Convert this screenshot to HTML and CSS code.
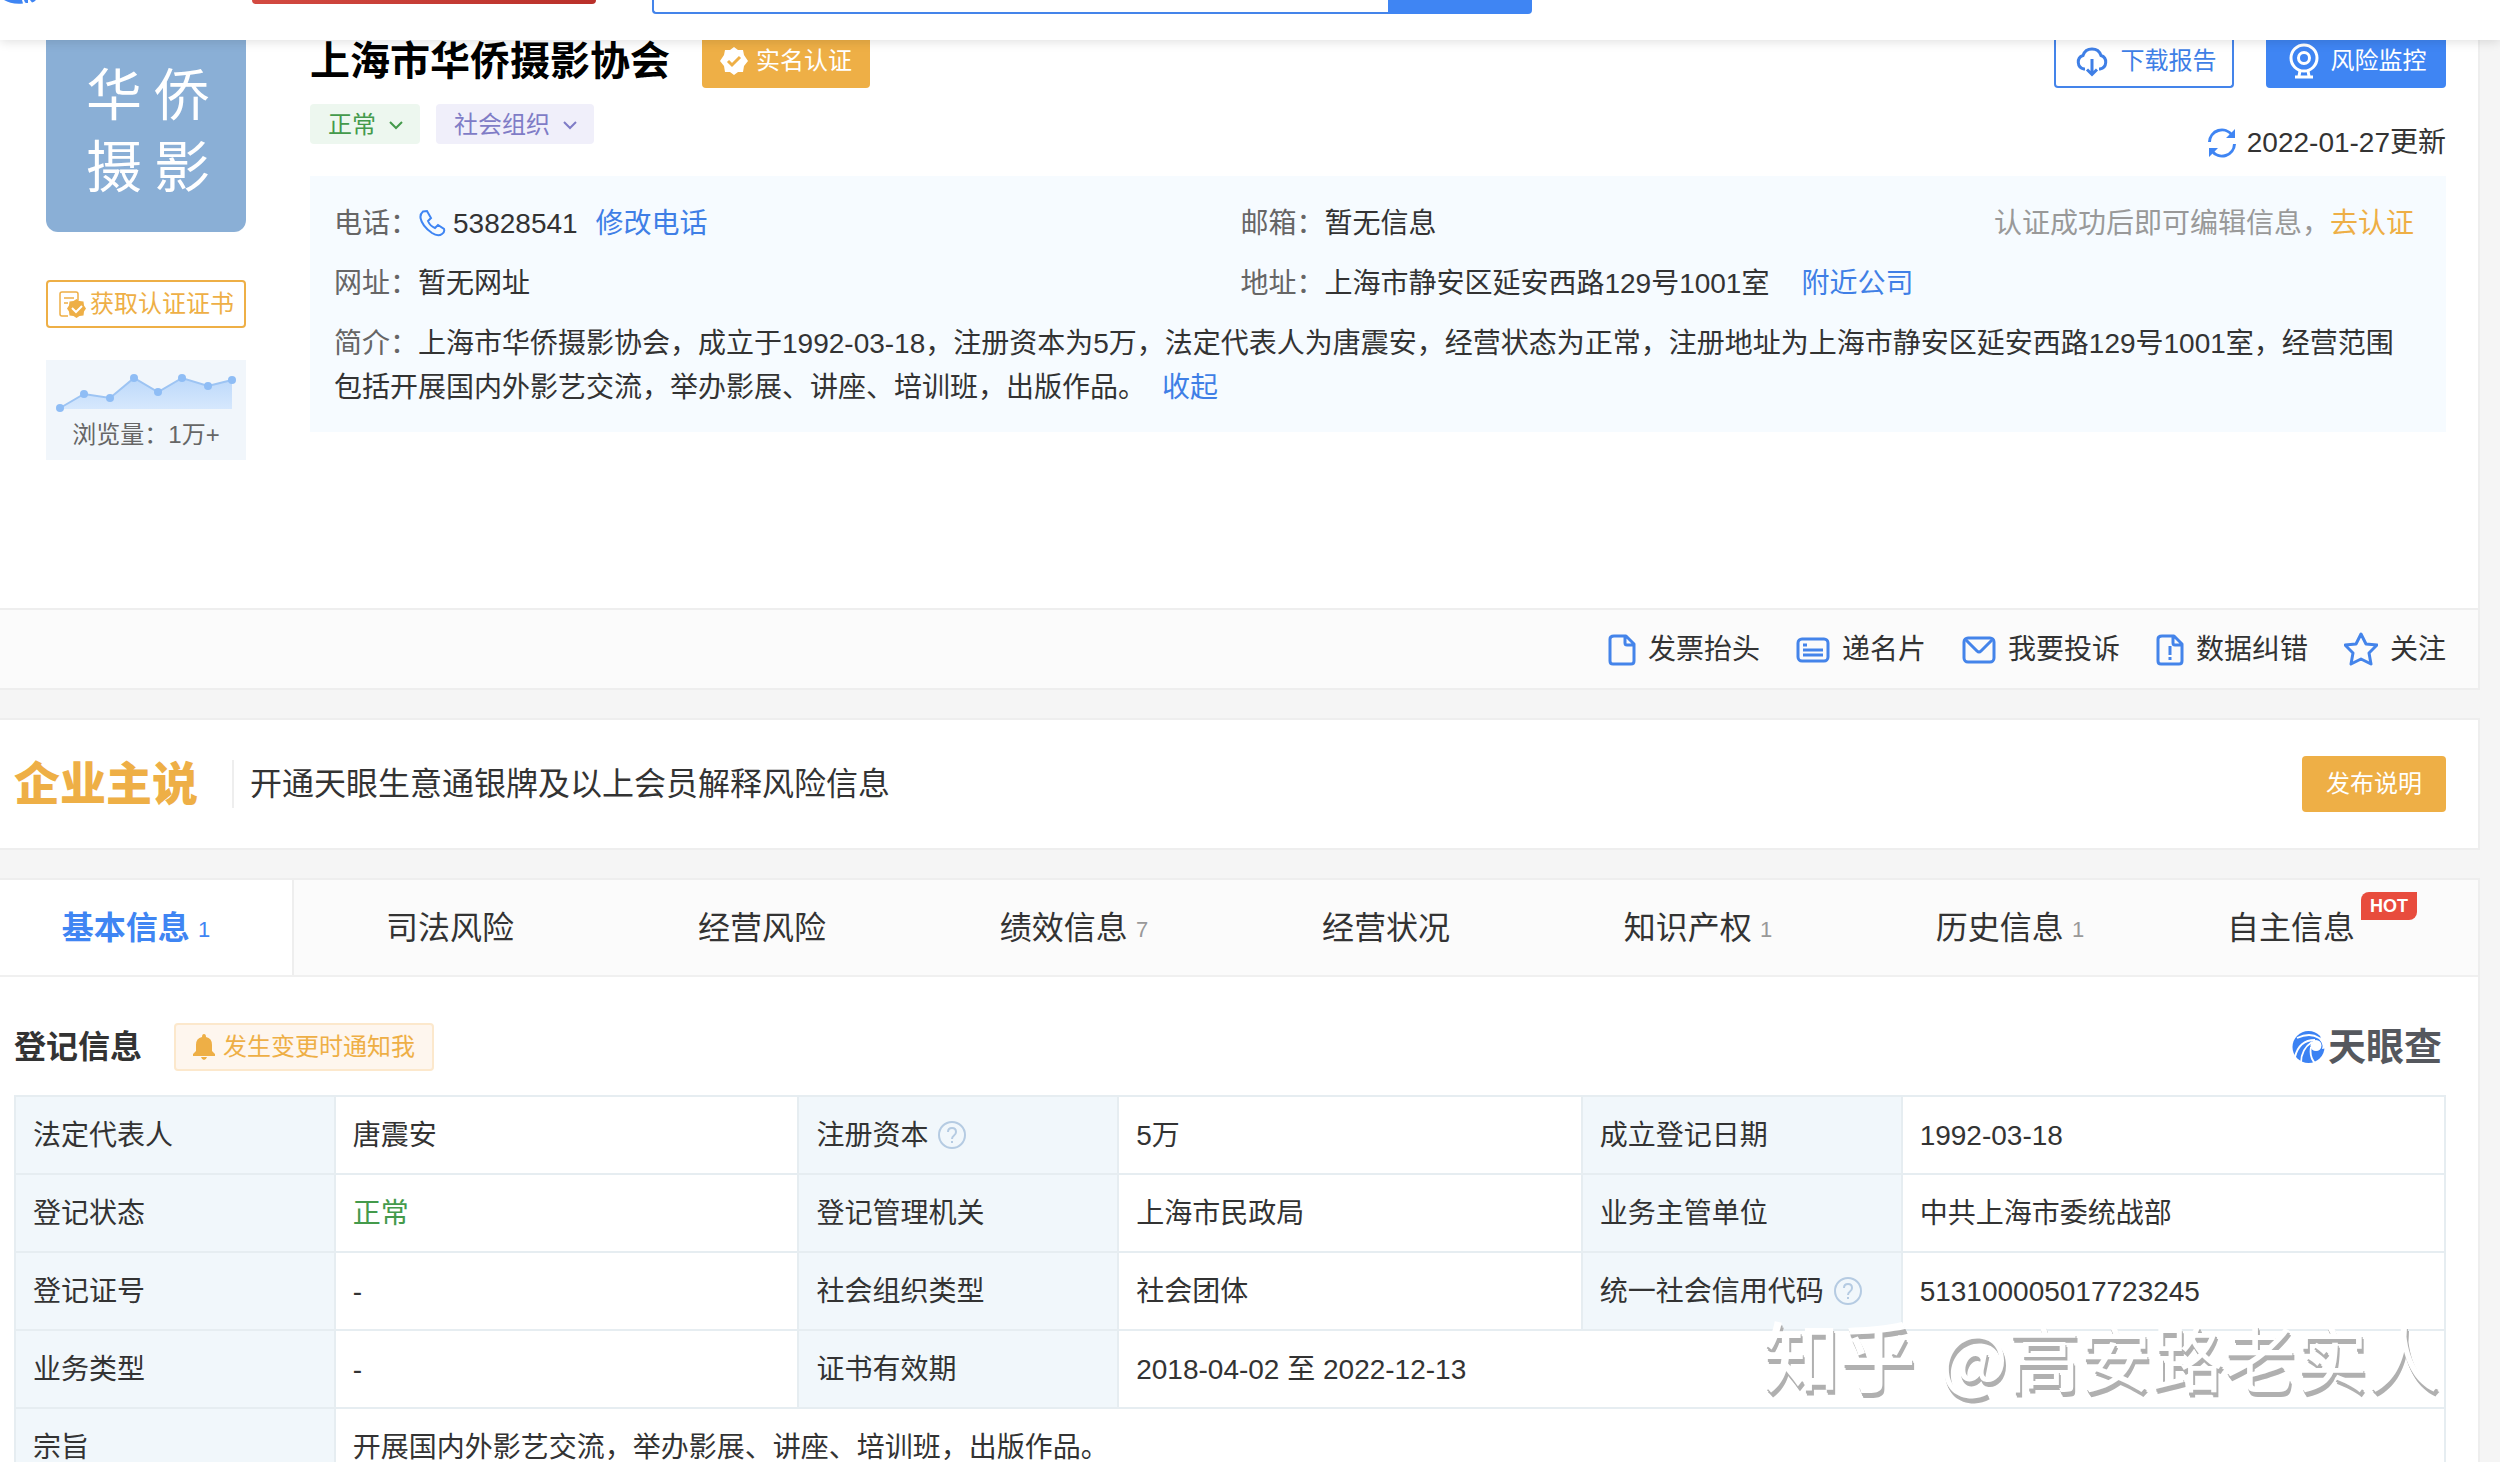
FILE: index.html
```html
<!DOCTYPE html>
<html lang="zh-CN">
<head>
<meta charset="utf-8">
<title>上海市华侨摄影协会</title>
<link rel="stylesheet" href="styles.css">
</head>
<body>
<header class="topbar">
  <svg class="topbar-logo" viewBox="0 0 32 4" aria-hidden="true"><path d="M0 0h18l1 3.500q-12 1-19-3.500zM20 0h4v3q-2 0-3-.500zM26 0h6q-2 2-4 2.500z"/></svg>
  <div class="topbar-banner"></div>
  <form class="search">
    <input class="search-input" type="text" aria-label="搜索">
    <button class="search-button" type="button" aria-label="搜索"></button>
  </form>
</header>

<main class="page">
  <section class="card company">
    <div class="company-main">
      <aside class="side">
        <div class="avatar"><span>华</span><span>侨</span><span>摄</span><span>影</span></div>
        <button class="cert-button" type="button">
          <svg width="28" height="28" viewBox="0 0 28 28" aria-hidden="true"><path d="M10 26H4q-2 0-2-2V4q0-2 2-2h14q2 0 2 2v6M6 8h10M6 13h4" fill="none" stroke="#eeaf46" stroke-width="1.500"/><path d="M18.500 11l3 2 4 .500.500 4 2 3-2 3-.500 4-4 .500-3 2-3-2-4-.500-.500-4-2-3 2-3 .500-4 4-.500z" fill="#eeaf46" transform="translate(0 -2)"/><path d="M14 18l4 4 6-6" fill="none" stroke="#fff" stroke-width="2"/></svg>
          获取认证证书
        </button>
        <div class="views">
          <svg class="views-chart" viewBox="0 0 180 40" aria-hidden="true">
            <defs><linearGradient id="area" x1="0" y1="0" x2="0" y2="1"><stop offset="0" stop-color="#bcd8fa"/><stop offset="1" stop-color="#d6e8fd"/></linearGradient></defs>
            <path d="M4 35L28 21 54 25 78 5 102 19 126 5 152 13 176 7V36H4z" fill="url(#area)"/>
            <path d="M4 35L28 21 54 25 78 5 102 19 126 5 152 13 176 7" fill="none" stroke="#9dc4f3" stroke-width="2"/>
            <g fill="#8fbdf5"><circle cx="4" cy="35" r="4"/><circle cx="28" cy="21" r="4"/><circle cx="54" cy="25" r="4"/><circle cx="78" cy="5" r="4"/><circle cx="102" cy="19" r="4"/><circle cx="126" cy="5" r="4"/><circle cx="152" cy="13" r="4"/><circle cx="176" cy="7" r="4"/></g>
          </svg>
          <div>浏览量：1万+</div>
        </div>
      </aside>

      <div class="detail">
        <div class="detail-head">
          <div class="identity">
            <div class="name-row">
              <h1 class="name">上海市华侨摄影协会</h1>
              <span class="verified">
                <svg width="28" height="28" viewBox="0 0 28 28" aria-hidden="true"><path d="M14 0l4 3 5 0 1 5 4 6-4 5-1 6-5 0-4 3-4-3-5 0-1-6-4-5 4-6 1-5 5 0z" fill="#fff"/><path d="M8 14l4 4 8-8" fill="none" stroke="#eeaf46" stroke-width="3"/></svg>
                实名认证
              </span>
            </div>
            <div class="tags">
              <button class="tag tag-green" type="button">正常<svg width="16" height="10" viewBox="0 0 16 10" aria-hidden="true"><path d="M2 2l6 6 6-6"/></svg></button>
              <button class="tag tag-purple" type="button">社会组织<svg width="16" height="10" viewBox="0 0 16 10" aria-hidden="true"><path d="M2 2l6 6 6-6"/></svg></button>
            </div>
          </div>
          <div class="tools">
            <div class="tool-buttons">
              <button class="tool" type="button">
                <svg width="34" height="32" viewBox="0 0 34 32" aria-hidden="true"><path d="M10 24H9a7 7 0 0 1-1-13.500A9.500 9.500 0 0 1 26 10.500 7 7 0 0 1 25 24h-1M17 14v15M12 24.500l5 5 5-5"/></svg>
                下载报告
              </button>
              <button class="tool tool-primary" type="button">
                <svg width="30" height="36" viewBox="0 0 30 36" aria-hidden="true"><circle cx="15" cy="15" r="13"/><circle cx="15" cy="15" r="5.500"/><path d="M11 28l-1 5M19 28l1 5M6 34h18"/></svg>
                风险监控
              </button>
            </div>
            <div class="updated">
              <svg width="30" height="30" viewBox="0 0 30 30" aria-hidden="true"><path d="M2.500 14A12.500 12.500 0 0 1 25 7M27.500 16A12.500 12.500 0 0 1 5 23" fill="none" stroke="#3f85f3" stroke-width="3"/><path d="M28 1v9h-9zM2 29v-9h9z" fill="#3f85f3"/></svg>
              2022-01-27更新
            </div>
          </div>
        </div>

        <div class="info">
          <div class="info-grid">
            <div><span class="key">电话：</span><svg class="phone" width="28" height="28" viewBox="0 0 28 28" aria-hidden="true"><path d="M5 2.500l4-.500 4 7-3 3q2 5 7 7l3-3 6 4q1 3-2 5-4 3-10-1Q4 17 2.500 9 2 5 5 2.500z"/></svg>53828541<a class="link after-value" href="#">修改电话</a></div>
            <div><span class="key">邮箱：</span>暂无信息</div>
            <div class="hint">认证成功后即可编辑信息，<a class="link-gold" href="#">去认证</a></div>
            <div><span class="key">网址：</span>暂无网址</div>
            <div class="address"><span class="key">地址：</span>上海市静安区延安西路129号1001室<a class="link nearby" href="#">附近公司</a></div>
          </div>
          <p class="intro"><span class="key">简介：</span>上海市华侨摄影协会，成立于1992-03-18，注册资本为5万，法定代表人为唐震安，经营状态为正常，注册地址为上海市静安区延安西路129号1001室，经营范围包括开展国内外影艺交流，举办影展、讲座、培训班，出版作品。<a class="link fold" href="#">收起</a></p>
        </div>
      </div>
    </div>

    <div class="actions">
      <a class="action" href="#"><svg width="28" height="32" viewBox="0 0 28 32" aria-hidden="true"><path d="M6 2h12l8 8v17q0 3-3 3H5q-3 0-3-3V5q0-3 4-3zM17 3v6q0 2 2 2h6"/></svg>发票抬头</a>
      <a class="action" href="#"><svg width="34" height="26" viewBox="0 0 34 26" aria-hidden="true"><rect x="2" y="2" width="30" height="22" rx="4"/><path d="M7 8h4M7 13h20M7 18h20"/></svg>递名片</a>
      <a class="action" href="#"><svg width="34" height="28" viewBox="0 0 34 28" aria-hidden="true"><rect x="2" y="2" width="30" height="24" rx="4"/><path d="M4 4l11 11q2 2 4 0L30 4"/></svg>我要投诉</a>
      <a class="action" href="#"><svg width="28" height="32" viewBox="0 0 28 32" aria-hidden="true"><path d="M6 2h12l8 8v17q0 3-3 3H5q-3 0-3-3V5q0-3 4-3zM17 3v6q0 2 2 2h6M14 12v9M14 23v3"/></svg>数据纠错</a>
      <a class="action" href="#"><svg width="34" height="36" viewBox="1 0 34 36" aria-hidden="true"><path d="M18 2l5 10 11 1-8 8 2 11-10-5-10 5 2-11-8-8 11-1z"/></svg>关注</a>
    </div>
  </section>

  <section class="card owner">
    <strong class="owner-logo">企业主说</strong>
    <p class="owner-text">开通天眼生意通银牌及以上会员解释风险信息</p>
    <button class="publish" type="button">发布说明</button>
  </section>

  <section class="card record">
    <nav class="tabs">
      <a class="tab tab-active" href="#">基本信息<small>1</small></a>
      <a class="tab" href="#">司法风险</a>
      <a class="tab" href="#">经营风险</a>
      <a class="tab" href="#">绩效信息<small>7</small></a>
      <a class="tab" href="#">经营状况</a>
      <a class="tab" href="#">知识产权<small>1</small></a>
      <a class="tab" href="#">历史信息<small>1</small></a>
      <a class="tab" href="#">自主信息<b class="hot">HOT</b></a>
    </nav>

    <div class="record-body">
      <div class="record-head">
        <h2 class="record-title">登记信息</h2>
        <button class="notify" type="button">
          <svg width="22" height="26" viewBox="0 0 22 26" aria-hidden="true"><path d="M11 0q2 0 2 3 6 1 6 8v6l3 3v2H0v-2l3-3v-6q0-7 6-8 0-3 2-3zM8 23h6q-1 3-3 3t-3-3z" fill="#eeaf46"/></svg>
          发生变更时通知我
        </button>
        <div class="brand">
          <svg width="34" height="34" viewBox="0 0 34 34" aria-hidden="true"><circle cx="16.500" cy="17" r="16" fill="#3b82f3"/><path d="M29 4l6 8v6l-5 1q2-6-2-9z" fill="#fff"/><circle cx="24" cy="15.500" r="5.500" fill="#fff"/><path d="M23 10Q7 10 3 27M20 12Q9 19 9 33M19 17Q17 28 24 34M5 8Q18 2 27 8q4 3 5 9" fill="none" stroke="#fff" stroke-width="1.800"/></svg>
          <span>天眼查</span>
        </div>
      </div>

      <table class="facts">
        <colgroup><col class="c-key"><col class="c-val"><col class="c-key"><col class="c-val"><col class="c-key"><col class="c-last"></colgroup>
        <tbody>
          <tr><th scope="row">法定代表人</th><td>唐震安</td><th scope="row">注册资本<svg class="help" width="28" height="28" viewBox="0 0 28 28" aria-hidden="true"><circle cx="14" cy="14" r="13"/><path d="M10 11q0-4 4-4t4 4q0 2-2 3.500-2 1.500-2 3.500M14 20v2"/></svg></th><td>5万</td><th scope="row">成立登记日期</th><td>1992-03-18</td></tr>
          <tr><th scope="row">登记状态</th><td class="ok">正常</td><th scope="row">登记管理机关</th><td>上海市民政局</td><th scope="row">业务主管单位</th><td>中共上海市委统战部</td></tr>
          <tr><th scope="row">登记证号</th><td>-</td><th scope="row">社会组织类型</th><td>社会团体</td><th scope="row">统一社会信用代码<svg class="help" width="28" height="28" viewBox="0 0 28 28" aria-hidden="true"><circle cx="14" cy="14" r="13"/><path d="M10 11q0-4 4-4t4 4q0 2-2 3.500-2 1.500-2 3.500M14 20v2"/></svg></th><td>513100005017723245</td></tr>
          <tr><th scope="row">业务类型</th><td>-</td><th scope="row">证书有效期</th><td colspan="3">2018-04-02 至 2022-12-13</td></tr>
          <tr><th scope="row">宗旨</th><td colspan="5">开展国内外影艺交流，举办影展、讲座、培训班，出版作品。</td></tr>
        </tbody>
      </table>
    </div>
  </section>
</main>
<div class="watermark"><b>知乎</b> @高安路老实人</div>
</body>
</html>
```
FILE: styles.css
```css
* { box-sizing: border-box; }

html { scrollbar-width: none; }

body {
  margin: 0;
  background: #f5f5f5;
  color: #333;
  font: 28px/44px "Liberation Sans", "Noto Sans CJK SC", sans-serif;
}

h1, h2, p { margin: 0; }
a { color: inherit; text-decoration: none; }
button { margin: 0; padding: 0; border: 0; font: inherit; cursor: pointer; }
svg { flex: none; fill: none; }

/* Sticky top bar */
.topbar {
  position: sticky;
  top: 0;
  z-index: 2;
  display: flex;
  align-items: flex-start;
  height: 40px;
  padding-left: 4px;
  background: #fff;
  box-shadow: 0 2px 10px rgba(0, 0, 0, .12);
}
.topbar-logo { width: 32px; height: 4px; fill: #3f85f3; }
.topbar-banner {
  width: 344px;
  height: 4px;
  margin: 0 56px 0 216px;
  border-radius: 0 0 4px 4px;
  background: linear-gradient(90deg, #d34a41, #b9302a);
}
.search { display: flex; width: 880px; height: 14px; }
.search-input {
  flex: 1;
  min-width: 0;
  border: 2px solid #4484ea;
  border-width: 0 0 2px 2px;
  border-radius: 0 0 0 4px;
  padding: 0;
}
.search-button { width: 144px; background: #3f85f3; border-radius: 0 0 4px 0; }

/* Cards */
.page { margin-right: 20px; }
.card {
  margin-bottom: 28px;
  background: #fff;
  border: 2px solid #eee;
  border-left: 0;
}
.company { border-top: 0; }
.company-main {
  display: flex;
  gap: 64px;
  min-height: 568px;
  padding: 0 32px 0 46px;
}

.side { flex: none; width: 200px; font-size: 24px; }
.avatar {
  display: grid;
  grid-template-columns: 56px 56px;
  column-gap: 12px;
  justify-content: center;
  align-content: center;
  height: 192px;
  padding: 0 0 8px 4px;
  border-radius: 0 0 12px 12px;
  background: #8aafd6;
  color: #fff;
  font-size: 56px;
  line-height: 72px;
}
.cert-button {
  display: flex;
  align-items: center;
  justify-content: center;
  gap: 4px;
  width: 100%;
  height: 48px;
  margin: 48px 0 32px;
  border: 2px solid #eeaf46;
  border-radius: 4px;
  background: #fff;
  color: #eeaf46;
  white-space: nowrap;
}
.views {
  height: 100px;
  padding-top: 13px;
  background: #f1f6fb;
  color: #666;
  text-align: center;
}
.views-chart { display: block; width: 180px; height: 40px; margin: 0 auto; }

.detail { flex: 1; min-width: 0; }
.detail-head { display: flex; justify-content: space-between; height: 136px; }
.name-row { display: flex; align-items: center; gap: 32px; height: 48px; margin-bottom: 16px; }
.name { padding-bottom: 6px; color: #000; font-size: 40px; line-height: 40px; font-weight: 700; }
.verified {
  display: flex;
  align-items: center;
  gap: 8px;
  height: 48px;
  padding: 0 18px 6px;
  border-radius: 0 0 4px 4px;
  background: #eeaf46;
  color: #fff;
  font-size: 24px;
}
.tags { display: flex; gap: 16px; }
.tag {
  display: flex;
  align-items: center;
  gap: 12px;
  height: 40px;
  padding: 1px 16px 0 18px;
  border-radius: 4px;
  font-size: 24px;
}
.tag svg { stroke: currentColor; stroke-width: 2; }
.tag-green { background: #edf7ef; color: #449a4b; }
.tag-purple { background: #f0effa; color: #7f7cc6; }

.tools { display: flex; flex-direction: column; align-items: flex-end; gap: 32px; }
.tool-buttons { display: flex; gap: 32px; }
.tool {
  display: flex;
  align-items: center;
  justify-content: center;
  gap: 12px;
  width: 180px;
  height: 48px;
  padding: 0 0 4px 3px;
  border: 2px solid #4484ea;
  border-top: 0;
  border-radius: 0 0 4px 4px;
  background: #fff;
  color: #3f7fe6;
  font-size: 24px;
}
.tool svg { stroke: currentColor; stroke-width: 3; }
.tool-primary { border-color: #3f85f3; background: #3f85f3; color: #fff; }
.updated { display: flex; align-items: center; gap: 10px; padding-top: 1px; }

.info { min-height: 256px; padding: 26px 32px 22px 24px; background: #f6fbff; }
.info-grid { display: grid; grid-template-columns: 906fr 684fr 489fr; row-gap: 16px; margin-bottom: 16px; }
.key { color: #666; }
.link { color: #3f7fe6; }
.link-gold { color: #eeaf46; }
.hint { color: #999; text-align: right; white-space: nowrap; }
.address { grid-column: 2 / 4; }
.phone { margin-right: 7px; vertical-align: -4px; stroke: #3f85f3; stroke-width: 2; }
.after-value { margin-left: 18px; }
.nearby { margin-left: 32px; }
.fold { margin-left: 16px; }

.actions {
  display: flex;
  align-items: center;
  justify-content: flex-end;
  gap: 36px;
  height: 80px;
  padding: 2px 32px 0 0;
  border-top: 2px solid #eee;
  background: #fbfbfb;
}
.action { display: flex; align-items: center; gap: 12px; }
.action svg { stroke: #4484ea; stroke-width: 3; stroke-linejoin: round; }

/* Owner statement */
.owner { display: flex; align-items: center; height: 132px; padding: 0 32px 0 14px; }
.owner-logo {
  margin-right: 34px;
  padding-bottom: 8px;
  color: #eeaf46;
  font: 900 46px/48px "Noto Sans CJK SC", sans-serif;
}
.owner-text {
  flex: 1;
  padding-left: 16px;
  border-left: 2px solid #eee;
  font-size: 32px;
  line-height: 48px;
}
.publish {
  width: 144px;
  height: 56px;
  border-radius: 4px;
  background: #eeaf46;
  color: #fff;
  font-size: 24px;
}

/* Tabs */
.tabs {
  display: grid;
  grid-template-columns: 294fr repeat(7, 312fr);
  height: 97px;
  border-bottom: 2px solid #f0f0f0;
  background: #fbfbfb;
  font-size: 32px;
}
.tab { display: flex; align-items: center; justify-content: center; }
.tab small { margin: 4px 0 0 8px; color: #999; font-size: 22px; }
.tab-active {
  padding-right: 20px;
  border-right: 2px solid #eee;
  background: #fff;
  color: #3f85f3;
  font-weight: 700;
}
.tab-active small { color: inherit; font-weight: 400; }
.hot {
  align-self: flex-start;
  width: 56px;
  margin: 12px 0 0 6px;
  border-radius: 8px 0 8px 0;
  background: #e84c3d;
  color: #fff;
  font-size: 18px;
  line-height: 28px;
  text-align: center;
}

/* Registration record */
.record-body { padding: 46px 32px 40px 14px; }
.record-head { display: flex; align-items: center; gap: 32px; height: 48px; margin-bottom: 24px; }
.record-title { font-size: 32px; line-height: 48px; }
.notify {
  display: flex;
  align-items: center;
  gap: 8px;
  height: 48px;
  padding: 0 17px;
  border: 2px solid #fce8cc;
  border-radius: 4px;
  background: #fef6ee;
  color: #eeaf46;
  font-size: 24px;
}
.brand {
  display: flex;
  align-items: center;
  gap: 2px;
  margin-left: auto;
  padding-right: 4px;
  color: #55585e;
  font-size: 38px;
  font-weight: 700;
}

.facts { width: 100%; border-collapse: collapse; table-layout: fixed; }
.c-key { width: 13.16%; }
.c-val { width: 19.08%; }
.facts th, .facts td {
  height: 78px;
  padding: 2px 16px 0 17px;
  border: 2px solid #e6edf1;
  font-weight: 400;
  text-align: left;
  white-space: nowrap;
}
.facts th { background: #f1f7fb; }
.facts .ok { color: #449a4b; }
.help { margin-left: 10px; vertical-align: -4px; stroke: #b5cbe2; stroke-width: 2; }

.watermark {
  position: absolute;
  right: 60px;
  top: 1309px;
  z-index: 3;
  color: #fff;
  font: 72px/88px "Noto Sans CJK SC", sans-serif;
  text-shadow: 1px 3px 0 #b0b0b0, 2px 5px 0 #b0b0b0;
  white-space: nowrap;
  pointer-events: none;
}
.watermark b { margin-right: 8px; font-size: 76px; font-weight: 500; }
```
